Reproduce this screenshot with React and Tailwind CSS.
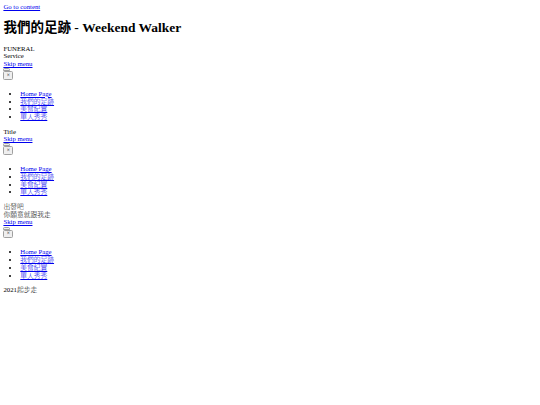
import React from "react";

const items = ["Home Page", "我們的足跡", "美食紀實", "單人秀秀"];

function Menu() {
  return (
    <>
      <a href="#" className="block w-fit text-[#0000ee] underline">Skip menu</a>
      <div className="flex h-[15.3px] flex-col items-start pt-[0.3px]">
        <button className="h-[3px] w-[7px] rounded-t-[1.5px] border border-[#a0a0a0] bg-[#efefef]" />
        <button className="flex h-[8.5px] w-[10px] items-center justify-center rounded-[1.5px] border border-[#a0a0a0] bg-[#efefef] text-[5.6px] leading-none text-black">
          ×
        </button>
      </div>
      <ul className="my-[6.75px] list-disc pl-[16.9px]">
        {items.map((t) => (
          <li key={t}>
            <a href="#" className="text-[#0000ee] underline">{t}</a>
          </li>
        ))}
      </ul>
    </>
  );
}

export default function App() {
  return (
    <div className="min-h-[405px] w-[540px] bg-white p-[3.4px] font-['Liberation_Serif','Noto_Sans_CJK_TC',serif] text-[6.75px] font-light leading-[7.75px] text-black">
      <a href="#" className="block w-fit text-[#0000ee] underline">Go to content</a>
      <h1 className="my-[9px] text-[13.5px] font-bold leading-[15.5px]">我們的足跡 - Weekend Walker</h1>
      <div>FUNERAL</div>
      <div>Service</div>
      <Menu />
      <div>Title</div>
      <Menu />
      <div>出發吧</div>
      <div>你願意就跟我走</div>
      <Menu />
      <div>2021起步走</div>
    </div>
  );
}
